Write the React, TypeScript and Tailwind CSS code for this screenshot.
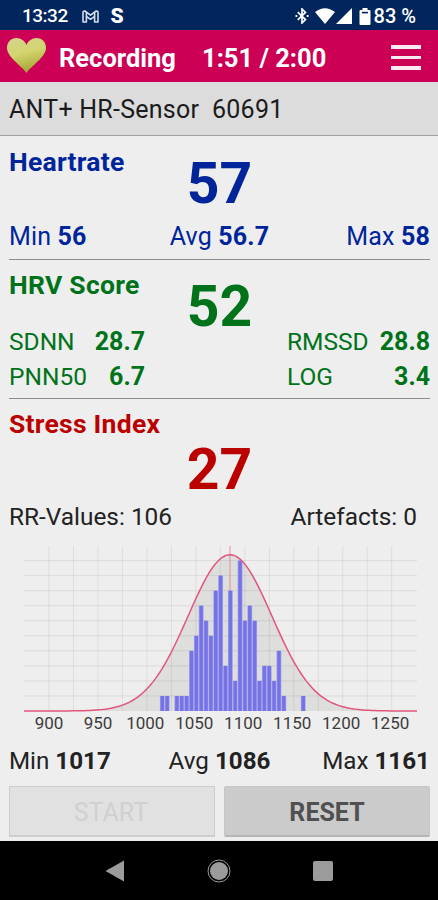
import type { ReactNode } from 'react'

const bins = [
  1, 1, 0, 1, 1, 1, 4, 5, 7, 6, 5, 8, 9, 3, 8, 2, 10, 6, 7, 6, 2, 3, 3, 2, 4, 1,
  0, 0, 0, 1,
]

const ticks = [900, 950, 1000, 1050, 1100, 1150, 1200, 1250]

// chart geometry, in svg units (1 unit = 1px)
const LEFT = 24
const RIGHT = 417
const BASE = 165
const ROW = 15.04
const MEAN = 230
const SIGMA = 42
const PEAK = 156.3

function curvePath() {
  const points: string[] = []
  for (let x = LEFT; x <= RIGHT; x += 3) {
    const z = (x - MEAN) / SIGMA
    const y = BASE - PEAK * Math.exp(-0.5 * z * z)
    points.push(`${x} ${y.toFixed(2)}`)
  }
  return 'M' + points.join(' L')
}

function Histogram() {
  const curve = curvePath()

  return (
    <svg width="438" height="194" viewBox="0 0 438 194" className="block">
      {/* Area under the curve */}
      <path d={`${curve} L${RIGHT} ${BASE} L${LEFT} ${BASE} Z`} fill="#dededd" />

      {/* Grid */}
      {Array.from({ length: 15 }, (_, i) => (
        <line key={i} x1={49 + i * 24.48} x2={49 + i * 24.48} y1="0" y2={BASE} stroke="#000" strokeOpacity="0.07" />
      ))}
      {Array.from({ length: 10 }, (_, i) => (
        <line key={i} x1={LEFT} x2={RIGHT} y1={BASE - (i + 1) * ROW} y2={BASE - (i + 1) * ROW} stroke="#000" strokeOpacity="0.08" />
      ))}

      {/* Mean */}
      <line x1={MEAN} x2={MEAN} y1="0" y2={BASE} stroke="#e58a9c" />

      {/* Bars */}
      {bins.map((n, i) => (
        <g key={i}>
          {n > 0 && (
            <>
              <rect x={159.9 + i * 4.86} y={BASE - n * ROW} width="4.8" height={n * ROW} fill="#a3a1ec" />
              <rect x={160.6 + i * 4.86} y={BASE - n * ROW} width="3.4" height={n * ROW} fill="#7673e6" />
            </>
          )}
        </g>
      ))}

      <path d={curve} fill="none" stroke="#e2557c" strokeWidth="1.5" />

      {ticks.map((t, i) => (
        <text key={t} x={(t < 1000 ? 49 : 47.3) + i * 48.98} y="183" textAnchor="middle" fontSize="17" fill="#3c3c3c">
          {t}
        </text>
      ))}
    </svg>
  )
}

function StatusBar() {
  return (
    <div className="flex h-[30px] items-center bg-[#00265d] pl-[22px] pr-[22px] pt-[2px] text-white">
      <span className="w-[60px] text-[19px] font-medium leading-7 tracking-[-0.5px]">13:32</span>
      <svg width="17" height="13" viewBox="0 0 17 13" fill="none" stroke="#d5deee" strokeWidth="1.6" strokeLinejoin="round">
        <path d="M1 12V2.5Q1 .8 2.8 1L8.5 5.2L14.2 1Q16 .8 16 2.5V12H12.6V6.4L8.5 9.3L4.4 6.4V12Z" />
        <path d="M4.4 6.4V2.4M12.6 6.4V2.4" />
      </svg>
      <span className="ml-[12px] flex h-[15px] w-[12px] items-center justify-center text-[21px] font-black leading-4">S</span>

      <svg className="ml-auto" width="14" height="16" viewBox="0 0 14 16" fill="none" stroke="#fff" strokeWidth="1.7">
        <path d="M2.8 4.2L10.4 11.6L7 15V1L10.4 4.4L2.8 11.8" />
        <path d="M.5 8H2.3M11.7 8H13.5" strokeWidth="1.8" />
      </svg>
      <svg className="ml-[6px]" width="20" height="16" viewBox="0 0 20 16" fill="#fff">
        <path d="M0 4Q10 -3.6 20 4L10 16Z" />
      </svg>
      <svg className="ml-[1px]" width="16" height="16" viewBox="0 0 16 16" fill="#fff">
        <path d="M16 0V16H0Z" />
      </svg>
      <svg className="ml-[7px]" width="12" height="17" viewBox="0 0 12 17">
        <path d="M3.5 0H8.5V2H10.5Q11.5 2 11.5 3V16Q11.5 17 10.5 17H1.5Q.5 17 .5 16V3Q.5 2 1.5 2H3.5Z" fill="#fff" />
        <path d="M3 4.6H9" stroke="#00265d" strokeWidth="1.6" />
      </svg>
      <span className="ml-[3px] whitespace-nowrap text-[20px] font-medium leading-7">83 %</span>
    </div>
  )
}

function Header() {
  return (
    <div className="flex h-[52px] items-center bg-[#cc0055] pl-[6px] pr-[17px] text-white">
      <svg width="42" height="37" viewBox="0 0 42 37" className="-mt-[2px]">
        <defs>
          <linearGradient id="heart" x1="0" y1="0" x2="0.3" y2="1">
            <stop offset="0" stopColor="#d2d38c" />
            <stop offset="0.5" stopColor="#d3d66f" />
            <stop offset="1" stopColor="#a9a738" />
          </linearGradient>
        </defs>
        <path
          d="M20.5 36C16 29 1 20 1 11C1 5 5 1 10.5 1C15 1 19 4 20.5 8C22 4 26 1 30.5 1C36 1 40 5 40 11C40 20 25 29 20.5 36Z"
          fill="url(#heart)"
        />
      </svg>
      <span className="ml-[11px] w-[143px] pt-[4px] text-[25.5px] font-bold">Recording</span>
      <span className="whitespace-nowrap pt-[4px] text-[25.5px] font-bold">1:51 / 2:00</span>
      <div className="ml-auto flex flex-col gap-[7px] pt-[3px]">
        <div className="h-[3.5px] w-[30px] bg-[#fdeaf2]" />
        <div className="h-[3.5px] w-[30px] bg-[#fdeaf2]" />
        <div className="h-[3.5px] w-[30px] bg-[#fdeaf2]" />
      </div>
    </div>
  )
}

function Stat({ label, value }: { label: string; value: string }) {
  return (
    <span className="whitespace-nowrap">
      {label} <b className="font-bold">{value}</b>
    </span>
  )
}

function Pair({ label, value }: { label: string; value: string }) {
  return (
    <div className="flex justify-between">
      <span className="text-[24.5px]">{label}</span>
      <b className="font-bold">{value}</b>
    </div>
  )
}

function Score({ children }: { children: ReactNode }) {
  return <div className="text-center text-[57px] font-bold leading-[50px]">{children}</div>
}

export default function App() {
  return (
    <div className="flex h-[900px] w-[438px] flex-col overflow-hidden bg-[#eeeeee] font-['Roboto','Liberation_Sans',sans-serif] text-[25px] text-[#222222]">
      <StatusBar />
      <Header />

      {/* Sensor */}
      <div className="h-[54px] whitespace-pre border-b border-[#a0a0a0] bg-[#dcdcdc] pl-[9px] pt-[13px] leading-[30px] tracking-[0.24px] text-[#1b1b1b]">
        ANT+ HR-Sensor  60691
      </div>

      {/* Heartrate */}
      <section className="ml-[9px] mr-[8px] h-[124px] border-b border-[#8c8c8c] pt-[11px] text-[#00259a]">
        <div className="grid h-[75px] grid-cols-3">
          <h2 className="whitespace-nowrap text-[26.5px] font-bold leading-[30px] tracking-[0.25px]">Heartrate</h2>
          <div className="pt-[12px]">
            <Score>57</Score>
          </div>
        </div>
        <div className="flex justify-between leading-[30px] tracking-[0.15px]">
          <Stat label="Min" value="56" />
          <span className="pl-[6px]">
            <Stat label="Avg" value="56.7" />
          </span>
          <Stat label="Max" value="58" />
        </div>
      </section>

      {/* HRV score */}
      <section className="ml-[9px] mr-[8px] h-[139px] border-b border-[#8c8c8c] pt-[10px] text-[#00731a]">
        <div className="grid h-[54px] grid-cols-3">
          <h2 className="whitespace-nowrap text-[26.5px] font-bold leading-[30px] tracking-[0.25px]">HRV Score</h2>
          <div className="pt-[12px]">
            <Score>52</Score>
          </div>
        </div>
        <div className="flex justify-between leading-[35px]">
          <div className="w-[136px]">
            <Pair label="SDNN" value="28.7" />
            <Pair label="PNN50" value="6.7" />
          </div>
          <div className="w-[143px]">
            <Pair label="RMSSD" value="28.8" />
            <Pair label="LOG" value="3.4" />
          </div>
        </div>
      </section>

      {/* Stress index */}
      <section className="ml-[9px] mr-[8px] h-[147px] pt-[10px]">
        <div className="text-[#bb0000]">
          <h2 className="h-[36px] text-[26.5px] font-bold leading-[30px] tracking-[0.25px]">Stress Index</h2>
          <Score>27</Score>
        </div>
        <div className="flex justify-between pr-[13px] pt-[7px] text-[24.4px] leading-[30px]">
          <span>RR-Values: 106</span>
          <span>Artefacts: 0</span>
        </div>
      </section>

      <Histogram />

      <div className="ml-[9px] mr-[8px] flex h-[46px] justify-between pt-[6px] text-[24.2px] leading-[30px]">
        <Stat label="Min" value="1017" />
        <span className="pl-[6px]">
          <Stat label="Avg" value="1086" />
        </span>
        <Stat label="Max" value="1161" />
      </div>

      <div className="ml-[9px] mr-[8px] grid h-[55px] grid-cols-2 gap-[9px]">
        <button disabled className="h-[51px] border border-b-2 border-[#cecece] bg-[#e1e1e1] pr-[2px] pt-[3px] text-[#d0d0d0]">
          START
        </button>
        <button className="h-[51px] rounded-[2px] border border-b-2 border-[#c6c6c6] border-b-[#b5b5b5] bg-[#cbcbcb] pt-[3px] font-bold text-[#505050]">
          RESET
        </button>
      </div>

      {/* Android navigation */}
      <div className="flex h-[59px] items-center justify-between bg-black pl-[105px] pr-[105px]">
        <svg width="19" height="22" viewBox="0 0 19 22" fill="#9b9b9b">
          <path d="M19 0.5V21.5L.5 11Z" />
        </svg>
        <svg width="24" height="24" viewBox="0 0 24 24">
          <circle cx="12" cy="12" r="9" fill="#9b9b9b" />
          <circle cx="12" cy="12" r="11" fill="none" stroke="#9b9b9b" />
        </svg>
        <div className="h-5 w-5 rounded-[2px] bg-[#9b9b9b]" />
      </div>
    </div>
  )
}
